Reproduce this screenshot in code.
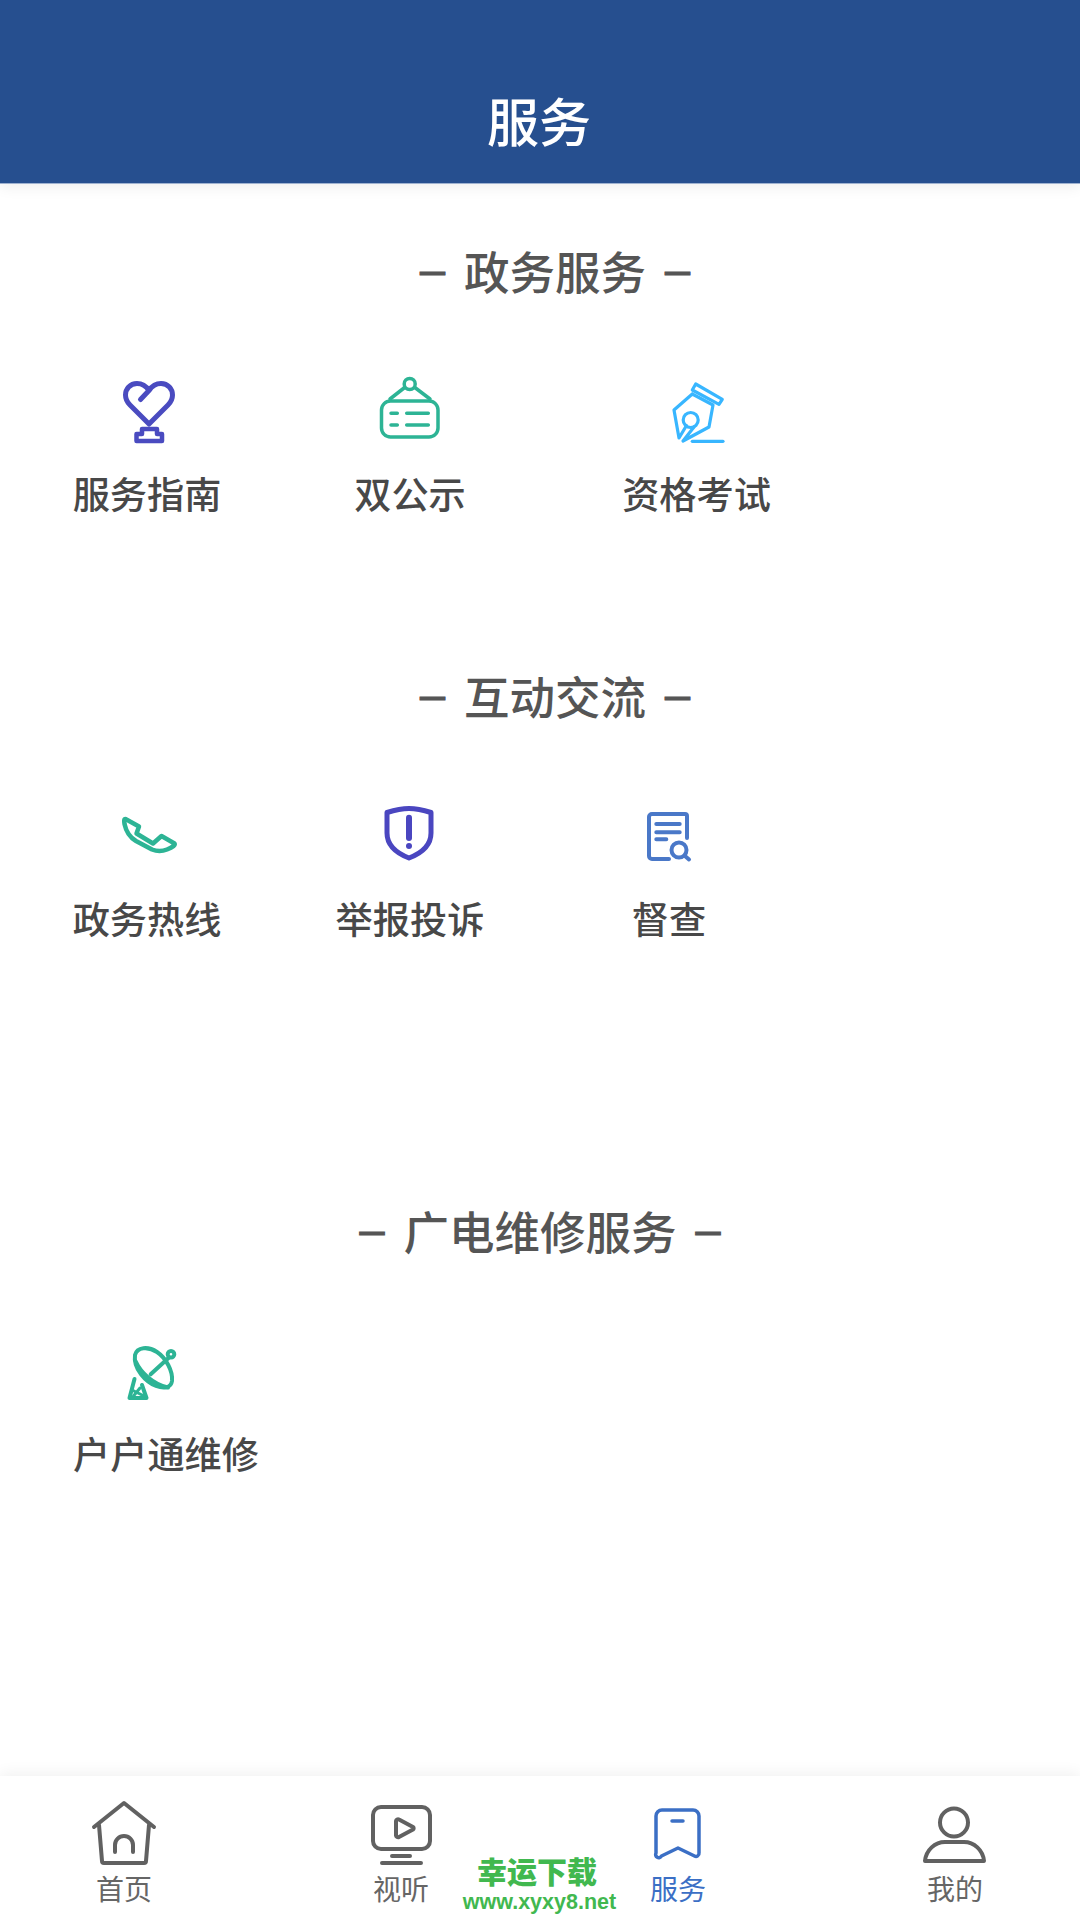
<div class="page">
  <header class="top"><h1>服务</h1></header>

  <main class="content">
    <section class="sec sec-a">
      <h2 class="title shifted"><span class="dash">–</span><span>政务服务</span><span class="dash">–</span></h2>
      <div class="row">
        <div class="cell first">
          <svg class="icon" viewBox="0 0 80 80" fill="none" stroke="#4a4bc0" stroke-width="5" stroke-linecap="round" stroke-linejoin="round">
            <g transform="translate(2 0)">
              <path d="M31.5 27.5L40 18.5C43 14 48 11.5 52 11.5C59 11.5 63.5 17 63.5 23C63.5 27 62 30 59 33L40 52L21 33C18 30 16.5 27 16.5 23C16.5 17 21 11.5 28 11.5C32 11.5 37 14 40 18.5"/>
              <path stroke-width="4.5" d="M33 62V57H48V62H53V69H27.5V62Z"/>
            </g>
          </svg>
          <span class="label">服务指南</span>
        </div>
        <div class="cell second">
          <svg class="icon" viewBox="0 0 80 80" fill="none" stroke="#2db495" stroke-width="3.5" stroke-linecap="round" stroke-linejoin="round">
            <rect x="11.5" y="29" width="56.5" height="36" rx="9"/>
            <circle cx="39.7" cy="12" r="5.5"/>
            <path d="M34 16L20 27M45.5 16L60 27M21 41.3H27.3M36.7 41.3H58.3M21 53H27.3M36.7 53H58.3"/>
          </svg>
          <span class="label">双公示</span>
        </div>
        <div class="cell third-a">
          <svg class="icon" viewBox="0 0 80 80" fill="none" stroke="#38b6ff" stroke-width="3.2" stroke-linecap="round" stroke-linejoin="round">
            <path d="M38.7 12L65.3 27.3L62 32.3L35.3 18Z"/>
            <path d="M35.3 22L17 38L22 66L29.5 53.5M35.3 22L56 33L52 55L26 69L37 55"/>
            <circle cx="33.7" cy="48" r="7.5"/>
            <path d="M35.3 69.3H66"/>
          </svg>
          <span class="label">资格考试</span>
        </div>
      </div>
    </section>

    <section class="sec sec-b">
      <h2 class="title shifted"><span class="dash">–</span><span>互动交流</span><span class="dash">–</span></h2>
      <div class="row">
        <div class="cell first">
          <svg class="icon" viewBox="0 0 80 80" fill="none" stroke="#2db495" stroke-width="4.5" stroke-linecap="round" stroke-linejoin="round">
            <path transform="translate(3 0)" d="M15.5 22L29 29.5L26.5 36.5L43 46.5L51.5 39L64.5 46.5C65.5 48 63 50 57 52.5C52 54.5 47 54.5 42 52.5L26 44C20 40.5 16 34 14.5 27C14 24 14 22 15.5 22Z"/>
          </svg>
          <span class="label">政务热线</span>
        </div>
        <div class="cell second">
          <svg class="icon" viewBox="0 0 80 80" fill="none" stroke="#4a46c0" stroke-width="5" stroke-linecap="round" stroke-linejoin="round">
            <path d="M17 15.5C25 13 32 11.5 39 11.5C46 11.5 53 13 61 15.5V36C61 48 52 56 39 61C26 56 17 48 17 36Z"/>
            <path stroke-width="6" d="M39 20.7V41"/>
            <circle cx="39" cy="49" r="3" fill="#4a46c0" stroke="none"/>
          </svg>
          <span class="label">举报投诉</span>
        </div>
        <div class="cell third-b">
          <svg class="icon" viewBox="0 0 80 80" fill="none" stroke="#4a78c8" stroke-width="4" stroke-linecap="round" stroke-linejoin="round">
            <path d="M58 41V19A2 2 0 0 0 56 17H23A3 3 0 0 0 20 20V59A3 3 0 0 0 23 62H40"/>
            <path d="M27.3 27H50.7M27.3 35.3H50.7M27.3 42.3H37.3"/>
            <circle cx="50" cy="53" r="7.5"/>
            <path d="M56 59L60 62.5"/>
          </svg>
          <span class="label">督查</span>
        </div>
      </div>
    </section>

    <section class="sec sec-c">
      <h2 class="title"><span class="dash">–</span><span>广电维修服务</span><span class="dash">–</span></h2>
      <div class="row">
        <div class="cell wide">
          <svg class="icon" viewBox="0 0 80 80" fill="none" stroke="#2db495" stroke-width="4" stroke-linecap="round" stroke-linejoin="round">
            <path d="M24 22C26 14 37 13 46 19C55 25 62 38 61 48C60 55 53 56 45 53C35 49 22 36 24 22Z"/>
            <path d="M24.5 28C30 40 42 51 57 54.5"/>
            <path d="M39.7 41.3L58 24.5"/>
            <circle cx="60" cy="21.3" r="3.3"/>
            <path d="M23.5 46L18.5 65H35.5L31 52"/>
            <path stroke-width="3" d="M21 57L33 63M22.5 63L29 55"/>
          </svg>
          <span class="label">户户通维修</span>
        </div>
      </div>
    </section>
  </main>

  <nav class="tabs">
    <div class="tab">
      <svg class="tab-icon" viewBox="0 0 72 72" fill="none" stroke="#616161" stroke-width="4" stroke-linecap="round" stroke-linejoin="round">
        <path d="M6 29L36 5L66 29M11 27L14 63A2 2 0 0 0 16 65H56A2 2 0 0 0 58 63L61 27"/>
        <path d="M27 54V47A9 9 0 0 1 45 47V54"/>
      </svg>
      <span class="tab-text">首页</span>
    </div>
    <div class="tab">
      <svg class="tab-icon" viewBox="0 0 72 72" fill="none" stroke="#616161" stroke-width="4" stroke-linecap="round" stroke-linejoin="round">
        <rect x="8" y="9" width="57" height="42" rx="8"/>
        <path d="M31 23A2 2 0 0 1 34 21.5L48 29A1.5 1.5 0 0 1 48 31.5L34 39A2 2 0 0 1 31 37.5Z"/>
        <path d="M27 58H45M17 65H56"/>
      </svg>
      <span class="tab-text">视听</span>
    </div>
    <div class="tab active">
      <svg class="tab-icon" viewBox="0 0 72 72" fill="none" stroke="#3b6fc5" stroke-width="3.5" stroke-linecap="round" stroke-linejoin="round">
        <path d="M20 12H51A6 6 0 0 1 57 18V55A3 3 0 0 1 52.5 58L36 50L19.5 58A3 3 0 0 1 14 55V18A6 6 0 0 1 20 12Z"/>
        <path d="M30 23H41"/>
      </svg>
      <span class="tab-text">服务</span>
    </div>
    <div class="tab">
      <svg class="tab-icon" viewBox="0 0 72 72" fill="none" stroke="#616161" stroke-width="4" stroke-linecap="round" stroke-linejoin="round">
        <circle cx="35" cy="24.5" r="14"/>
        <path d="M6 63C7 52 16 44 26 44H45C55 44 64 52 65 63Z"/>
      </svg>
      <span class="tab-text">我的</span>
    </div>
  </nav>

  <div class="mark">
    <div class="mark-cn">幸运下载</div>
    <div class="mark-en">www.xyxy8.net</div>
  </div>
</div>

<style>
  :global(body) {
    margin: 0;
    background: #fff;
  }
  .page {
    position: relative;
    width: 1080px;
    height: 1920px;
    overflow: hidden;
    display: flex;
    flex-direction: column;
    background: #fff;
    font-family: "Noto Sans CJK SC", "Noto Sans", sans-serif;
  }
  .top {
    height: 184px;
    flex: none;
    background: #264f8f;
    border-bottom: 1px solid #9fb2d0;
    box-sizing: border-box;
    box-shadow: 0 3px 14px rgba(0, 0, 0, 0.07);
    display: flex;
    align-items: flex-start;
    justify-content: center;
  }
  .top h1 {
    margin: 84px 2px 0 0;
    font-size: 52px;
    line-height: 72px;
    font-weight: 500;
    color: #fff;
  }
  .content {
    flex: 1;
    padding-top: 56px;
  }
  .sec-b { margin-top: 144px; }
  .sec-c { margin-top: 254px; }
  .title {
    margin: 0;
    height: 60px;
    line-height: 60px;
    font-size: 45.5px;
    font-weight: 500;
    color: #555;
    display: flex;
    justify-content: center;
    gap: 19px;
  }
  .dash {
    font-family: "Liberation Sans", sans-serif;
    font-size: 45px;
    font-weight: 400;
    -webkit-text-stroke: 1px #555;
  }
  .shifted { padding-left: 30px; }
  .row {
    display: flex;
    padding: 72px 0 0 73px;
  }
  .cell {
    display: flex;
    flex-direction: column;
    align-items: center;
    flex: none;
  }
  .first { width: 148px; }
  .second { width: 378px; }
  .third-a { margin-left: 24px; width: 147px; }
  .third-b { margin-left: 33px; width: 74px; }
  .wide { width: 187px; align-items: flex-start; }
  .wide .icon { margin: 1px 0 -1px 38px; }
  .icon {
    width: 80px;
    height: 80px;
    display: block;
    flex: none;
  }
  .label {
    margin-top: 13px;
    height: 56px;
    line-height: 56px;
    font-size: 37.2px;
    font-weight: 500;
    color: #484848;
    white-space: nowrap;
  }
  .tabs {
    flex: none;
    height: 144px;
    box-sizing: border-box;
    padding: 22px 0 0 64px;
    display: flex;
    gap: 157px;
    background: #fff;
    box-shadow: 0 -3px 14px rgba(0, 0, 0, 0.06);
  }
  .tab {
    width: 120px;
    display: flex;
    flex-direction: column;
    align-items: center;
    color: #666;
    font-size: 28px;
    line-height: 40px;
  }
  .tab-text { margin-top: -2px; }
  .tab.active { color: #3b6fc5; }
  .tab-icon {
    width: 72px;
    height: 72px;
    display: block;
    flex: none;
  }
  .mark {
    position: absolute;
    left: 437px;
    top: 1848px;
    width: 200px;
    text-align: center;
    color: #41b84f;
    font-weight: 900;
  }
  .mark-cn {
    font-size: 30px;
    line-height: 44px;
  }
  .mark-en {
    margin-top: -2px;
    padding-left: 5px;
    font-family: "Liberation Sans", sans-serif;
    font-weight: 700;
    font-size: 21.5px;
    line-height: 24px;
  }
</style>
